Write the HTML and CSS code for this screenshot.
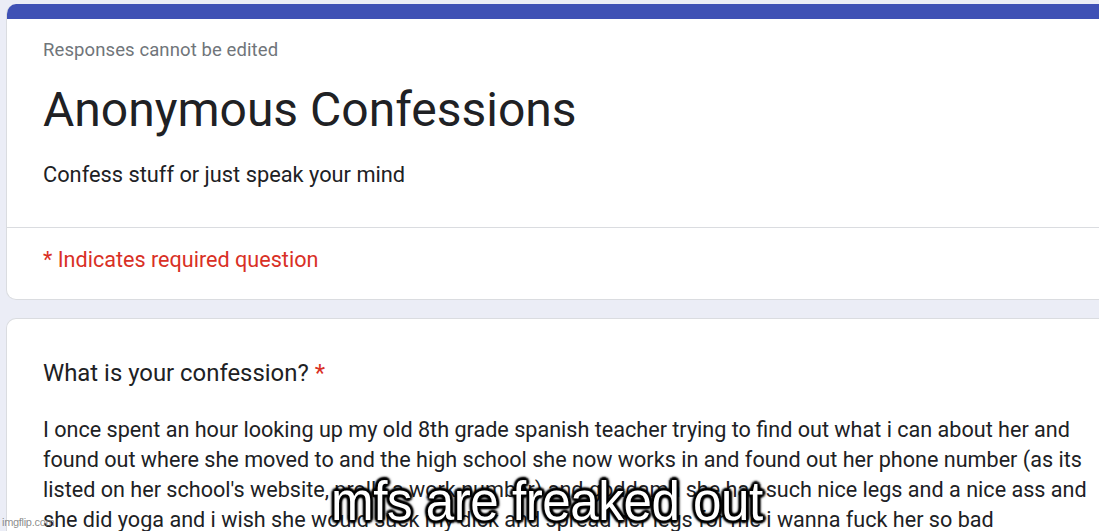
FILE: index.html
```html
<!DOCTYPE html>
<html>
<head>
<meta charset="utf-8">
<link rel="stylesheet" href="styles.css">
</head>
<body>
<div class="page">
  <section class="card header-card">
    <div class="accent"></div>
    <div class="header-main">
      <div class="note">Responses cannot be edited</div>
      <h1 class="title">Anonymous Confessions</h1>
      <div class="desc">Confess stuff or just speak your mind</div>
    </div>
    <div class="required">* Indicates required question</div>
  </section>
  <section class="card question-card">
    <div class="question">What is your confession? <span class="star">*</span></div>
    <div class="answer">I once spent an hour looking up my old 8th grade spanish teacher trying to find out what i can about her and<br>found out where she moved to and the high school she now works in and found out her phone number (as its<br>listed on her school's website, prolly a work number) and goddamn she has such nice legs and a nice ass and<br>she did yoga and i wish she would suck my dick and spread her legs for me i wanna fuck her so bad</div>
  </section>
</div>
<div class="caption">mfs are freaked out</div>
<div class="watermark">imgflip.com</div>
</body>
</html>
```
FILE: styles.css
```css
html, body {
  margin: 0;
  padding: 0;
  height: 100%;
  overflow: hidden;
}
body {
  background: #ebedf6;
  font-family: Roboto, "Liberation Sans", sans-serif;
  color: #202124;
  position: relative;
}
.page {
  padding: 4px 0 0 6px;
  display: flex;
  flex-direction: column;
  gap: 18px;
  width: 1120px;
}
.card {
  background: #fff;
  border: 1px solid #dadce0;
  border-radius: 10px;
  overflow: hidden;
}
.header-card {
  border-top: none;
}
.accent {
  height: 15px;
  background: #3f51b5;
}
.header-main {
  padding: 20px 36px 39px 36px;
  border-bottom: 1px solid #dadce0;
}
.note {
  font-size: 18.5px;
  color: #70757a;
  line-height: 22px;
  letter-spacing: 0.1px;
}
.title {
  margin: 21px 0 0 0;
  font-size: 48px;
  font-weight: 400;
  line-height: 56px;
}
.desc {
  margin-top: 24px;
  font-size: 21.8px;
  line-height: 26px;
}
.required {
  padding: 19px 36px 26px 36px;
  font-size: 21.6px;
  line-height: 26px;
  color: #d93025;
}
.question-card {
  padding: 40px 36px 20px 36px;
  border-bottom: none;
  border-radius: 10px 10px 0 0;
}
.question {
  font-size: 23.9px;
  line-height: 28px;
}
.star {
  color: #d93025;
}
.answer {
  margin-top: 28px;
  font-size: 21.6px;
  line-height: 30px;
  white-space: nowrap;
}
.caption {
  position: absolute;
  left: 331px;
  top: 473px;
  font-family: "Liberation Sans", Arial, sans-serif;
  font-size: 55px;
  letter-spacing: -0.5px;
  color: #fff;
  line-height: 56px;
  transform: scaleX(0.93);
  transform-origin: left center;
  text-shadow:
    -2px -2px 2px #000, 2px -2px 2px #000, -2px 2px 2px #000, 2px 2px 2px #000,
    0 -3px 2px #000, 0 3px 2px #000, -3px 0 2px #000, 3px 0 2px #000,
    0 0 5px #000;
}
.watermark {
  position: absolute;
  left: 2px;
  bottom: 3px;
  font-family: "Liberation Sans", Arial, sans-serif;
  font-size: 11px;
  color: rgba(120, 120, 120, 0.85);
  letter-spacing: -0.3px;
}
```
